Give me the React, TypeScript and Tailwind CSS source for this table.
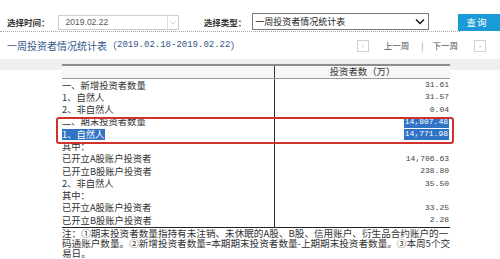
import React from "react";

const rows: { label: string; num: string; hlLabel?: boolean; hlNum?: boolean }[] = [
  { label: "一、新增投资者数量", num: "31.61" },
  { label: "1、自然人", num: "31.57" },
  { label: "2、非自然人", num: "0.04" },
  { label: "二、期末投资者数量", num: "14,807.48", hlNum: true },
  { label: "1、自然人", num: "14,771.98", hlLabel: true, hlNum: true },
  { label: "其中：", num: "" },
  { label: "已开立A股账户投资者", num: "14,706.63" },
  { label: "已开立B股账户投资者", num: "238.80" },
  { label: "2、非自然人", num: "35.50" },
  { label: "其中：", num: "" },
  { label: "已开立A股账户投资者", num: "33.25" },
  { label: "已开立B股账户投资者", num: "2.28" },
];

export default function App() {
  return (
    <div className="relative w-[500px] h-[259px] overflow-hidden bg-white font-['Noto_Sans_CJK_SC','Noto_Sans',sans-serif] text-[#333]">
      {/* filter bar */}
      <div className="h-[31px] pt-[13px] flex items-start">
        <div className="h-[18px] flex items-center pl-[7px] w-[58px] text-[8.5px] font-bold text-[#333] leading-none">
          选择时间：
        </div>
        <div className="mt-[2px] h-[15px] w-[122px] border border-[#cfcfcf] flex items-center">
          <span className="flex-1 pl-[7px] text-[8.5px] text-[#555] font-['Liberation_Sans',sans-serif] leading-none">
            2019.02.22
          </span>
          <span className="h-full w-[11px] border-l border-[#e0e0e0] flex items-center justify-center">
            <svg width="6" height="4" viewBox="0 0 6 4">
              <polyline points="0.5,0.5 3,3 5.5,0.5" fill="none" stroke="#c8c8c8" strokeWidth="1" />
            </svg>
          </span>
        </div>
        <div className="h-[18px] flex items-center pl-[25px] w-[74px] text-[8.5px] font-bold text-[#333] leading-none">
          选择类型：
        </div>
        <div className="h-[17px] w-[178px] border border-[#7a7a7a] flex items-center">
          <span className="flex-1 pl-[2px] text-[9px] text-[#222] leading-none">一周投资者情况统计表</span>
          <svg width="10" height="7" viewBox="0 0 10 7" className="mr-[3px]">
            <polyline points="1,1.5 5,5.5 9,1.5" fill="none" stroke="#111" strokeWidth="1.4" />
          </svg>
        </div>
        <div className="ml-[29px] mt-[1px] h-[17px] w-[42px] shrink-0 bg-[#1b9ad8] flex items-center justify-center text-white text-[9.5px] leading-none">
          <span className="pr-[4px] tracking-[1px]">查询</span>
        </div>
      </div>
      <div className="w-[460px] border-t border-dotted border-[#a8a8a8]" />

      {/* title row */}
      <div className="h-[27px] flex items-center">
        <div className="pl-[7px] text-[#34578a] text-[10px] leading-none flex items-center whitespace-nowrap">
          <span>一周投资者情况统计表（</span>
          <span className="font-['Liberation_Mono',monospace] text-[9px]">2019.02.18-2019.02.22</span>
          <span>）</span>
        </div>
        <div className="ml-auto flex items-center text-[8.5px] text-[#555] leading-none">
          <span className="w-[12px] h-[12px] border border-[#d0d0d0] flex items-center justify-center text-[7px] text-[#aaa]">‹</span>
          <span className="ml-[15px]">上一周</span>
          <span className="ml-[12px] text-[#888]">|</span>
          <span className="ml-[9px]">下一周</span>
          <span className="ml-[16px] mr-[14px] w-[12px] h-[12px] border border-[#d0d0d0] flex items-center justify-center text-[7px] text-[#aaa]">›</span>
        </div>
      </div>

      {/* table area */}
      <div className="pt-[5px] bg-[linear-gradient(to_bottom,#efefef_0px,#efefef_11px,#ffffff_11px)]">
        <div className="ml-[62px] w-[388px] bg-white">
          <div className="border-t-2 border-[#8c8c8c] border-b border-b-[#9a9a9a] flex h-[15px] bg-[#f7f7f7]">
            <div className="w-[213px] border-r border-[#333]" />
            <div className="flex-1 flex items-center justify-center text-[9.4px] text-[#333] leading-none">
              投资者数（万）
            </div>
          </div>
          <div className="border-b border-[#222]">
            {rows.map((r, i) => (
              <div key={i} className="flex h-[12.3px]">
                <div className="w-[213px] border-r border-[#333] flex items-center text-[9.3px] leading-none whitespace-nowrap">
                  {r.hlLabel ? (
                    <span className="h-[11px] flex items-center bg-[#3174c6] text-white pr-[1px]">{r.label}</span>
                  ) : (
                    <span>{r.label}</span>
                  )}
                </div>
                <div className="flex-1 flex items-center justify-end pr-[1px] font-['Liberation_Mono',monospace] text-[8px] leading-none text-[#444]">
                  {r.hlNum ? (
                    <span className="h-[11px] flex items-center bg-[#3174c6] text-white px-[1px]">{r.num}</span>
                  ) : (
                    <span>{r.num}</span>
                  )}
                </div>
              </div>
            ))}
          </div>
          <div className="text-[9.6px] leading-[10px] text-[#333] whitespace-nowrap">
            <div>注：①期末投资者数量指持有未注销、未休眠的A股、B股、信用账户、衍生品合约账户的一</div>
            <div>码通账户数量。②新增投资者数量=本期期末投资者数量-上期期末投资者数量。③本周5个交</div>
            <div>易日。</div>
          </div>
        </div>
      </div>

      {/* red highlight box */}
      <div className="absolute left-[56px] top-[117px] w-[398px] h-[27px] border-2 border-[#d0312d] rounded-[3px] pointer-events-none" />
    </div>
  );
}
